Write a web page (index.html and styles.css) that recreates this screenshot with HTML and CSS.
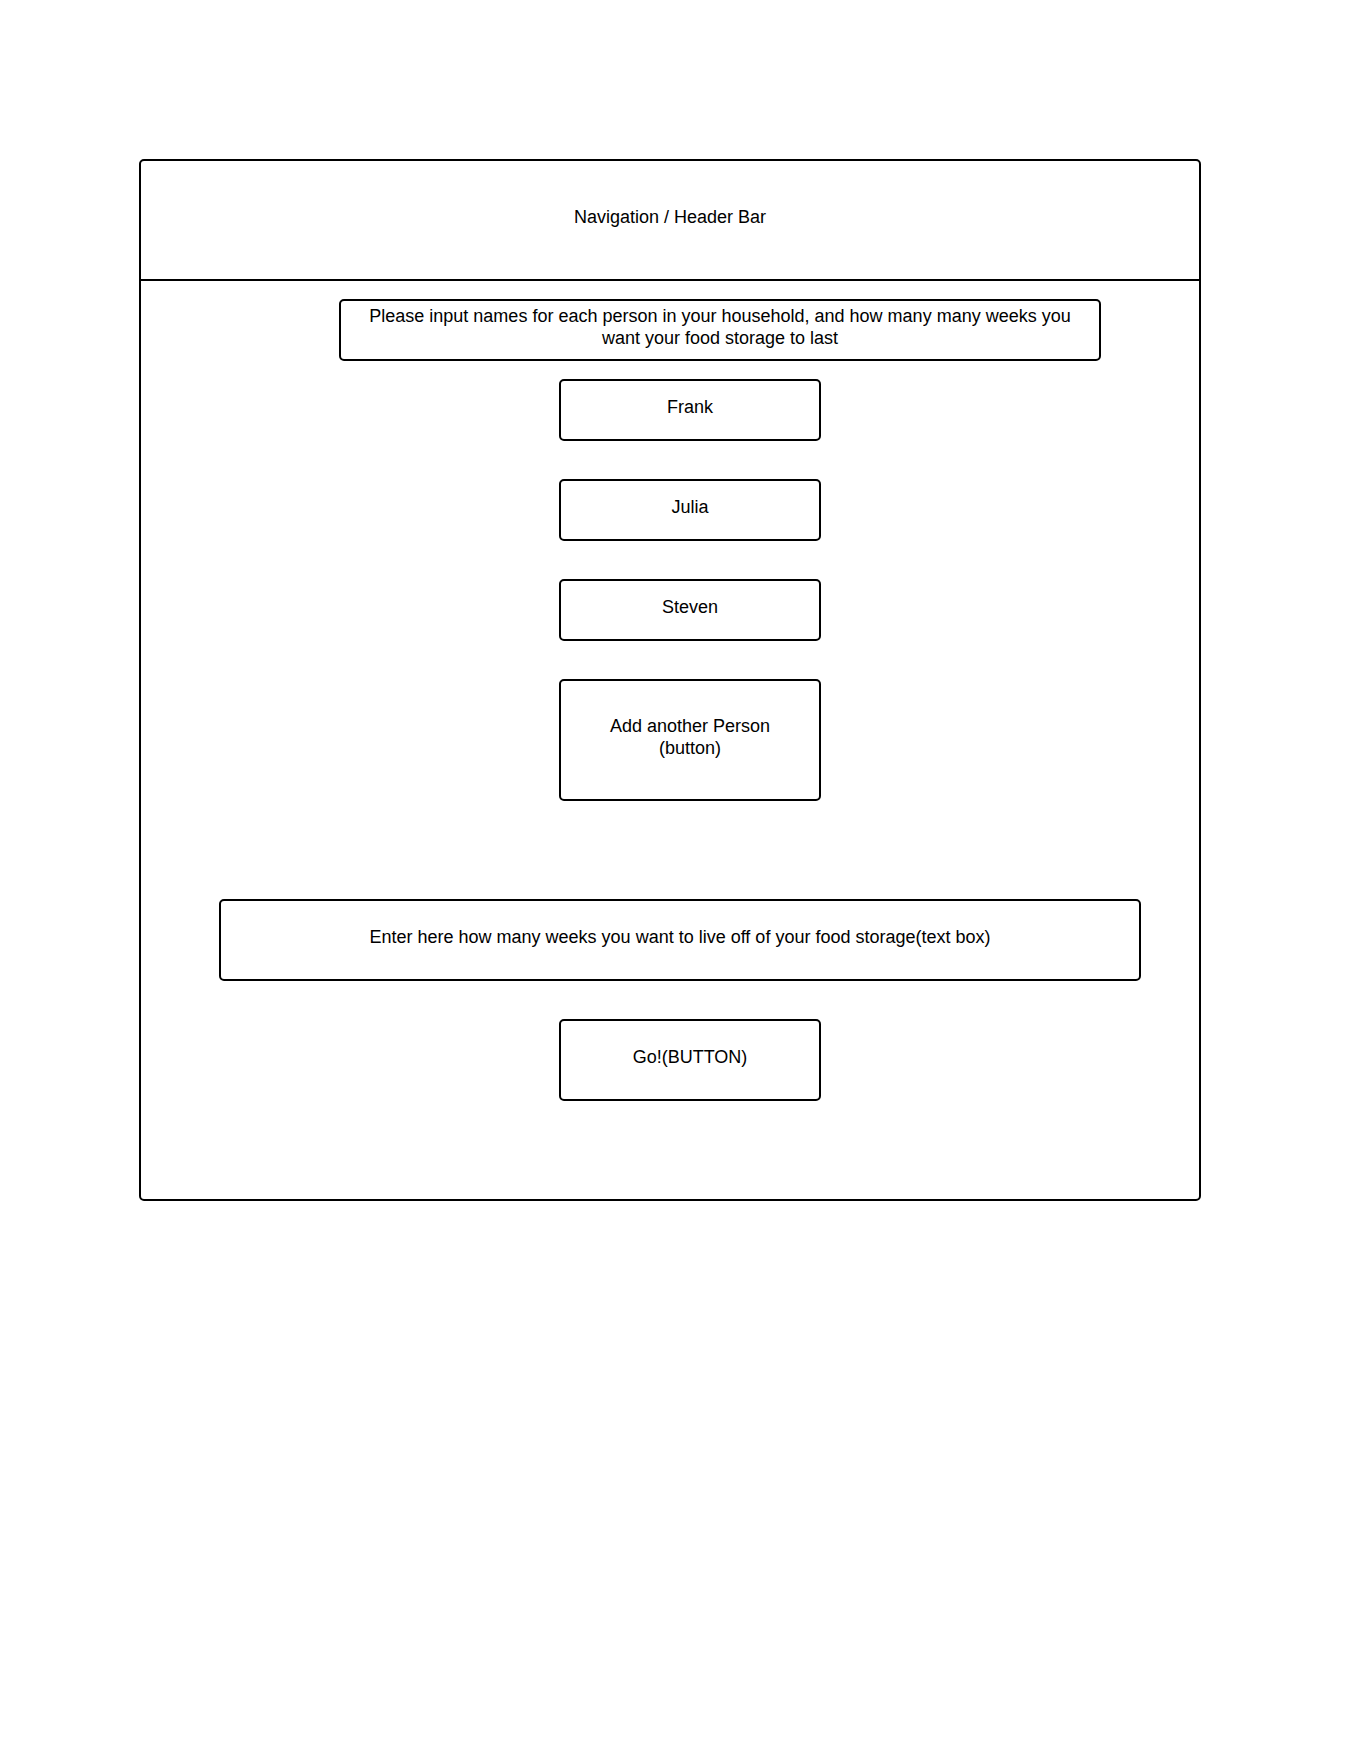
FILE: index.html
```html
<!DOCTYPE html>
<html lang="en">
<head>
<meta charset="utf-8">
<title>Food Storage Wireframe</title>
<link rel="stylesheet" href="styles.css">
</head>
<body>
<div class="frame">
  <div class="header"><span>Navigation / Header Bar</span></div>
  <div class="content">
    <div class="box instructions">Please input names for each person in your household, and how many many weeks you<br>want your food storage to last</div>
    <div class="box person first">Frank</div>
    <div class="box person">Julia</div>
    <div class="box person">Steven</div>
    <div class="box add">Add another Person<br>(button)</div>
    <div class="box weeks">Enter here how many weeks you want to live off of your food storage(text box)</div>
    <div class="box go">Go!(BUTTON)</div>
  </div>
</div>
</body>
</html>
```

FILE: styles.css
```css
* { box-sizing: border-box; }
html, body {
  margin: 0;
  padding: 0;
  background: #fff;
}
body {
  font-family: "Liberation Sans", Arial, sans-serif;
  font-size: 18px;
  line-height: 22.5px;
  color: #000;
  padding: 159px 0 0 139px;
}
.frame {
  width: 1062px;
  height: 1042px;
  border: 2px solid #000;
  border-radius: 5px;
  display: flex;
  flex-direction: column;
}
.header {
  height: 120px;
  border-bottom: 2px solid #000;
  display: flex;
  align-items: center;
  justify-content: center;
  padding-bottom: 6px;
}
.content {
  display: flex;
  flex-direction: column;
  align-items: flex-start;
  padding-top: 18px;
}
.box {
  border: 2px solid #000;
  border-radius: 5px;
  display: flex;
  align-items: center;
  justify-content: center;
  text-align: center;
}
.instructions {
  width: 762px;
  height: 62px;
  margin-left: 198px;
  padding-bottom: 6px;
}
.person {
  width: 262px;
  height: 62px;
  margin-left: 418px;
  margin-top: 38px;
  padding-bottom: 6px;
}
.person.first { margin-top: 18px; }
.add {
  width: 262px;
  height: 122px;
  margin-left: 418px;
  margin-top: 38px;
  padding-bottom: 6px;
}
.weeks {
  width: 922px;
  height: 82px;
  margin-left: 78px;
  margin-top: 98px;
  padding-bottom: 6px;
}
.go {
  width: 262px;
  height: 82px;
  margin-left: 418px;
  margin-top: 38px;
  padding-bottom: 6px;
}
```
